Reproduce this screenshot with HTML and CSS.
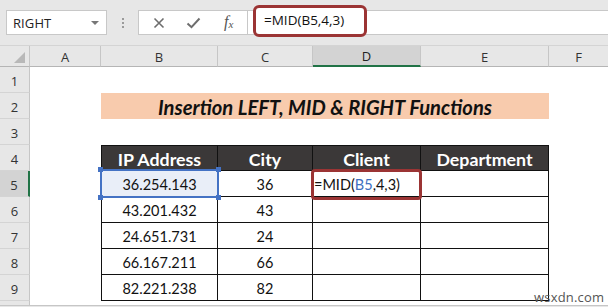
FILE: index.html
```html
<!DOCTYPE html>
<html>
<head>
<meta charset="utf-8">
<link rel="stylesheet" href="styles.css">
</head>
<body>
<div class="app">
  <div class="topbar">
    <div class="namebox"><span class="nametext">RIGHT</span><span class="caret"></span></div>
    <div class="grip"><i></i><i></i><i></i></div>
    <div class="fbtns">
      <svg class="ic ic-x" width="12" height="12" viewBox="0 0 12 12"><path d="M1.5 1.5 L10.5 10.5 M10.5 1.5 L1.5 10.5" stroke="#6d6d6d" stroke-width="1.6" fill="none"/></svg>
      <svg class="ic ic-ok" width="15" height="12" viewBox="0 0 15 12"><path d="M1.5 6.5 L5.5 10.2 L13.5 1.5" stroke="#6d6d6d" stroke-width="2" fill="none"/></svg>
      <span class="fx">f<sub>x</sub></span>
    </div>
    <div class="finput">
      <div class="fbox">=MID(B5,4,3)</div>
    </div>
  </div>
  <div class="sheet">
    <div class="corner"><span class="tri"></span></div>
    <div class="ch">A</div>
    <div class="ch">B</div>
    <div class="ch">C</div>
    <div class="ch ch-sel">D</div>
    <div class="ch">E</div>
    <div class="ch ch-last">F</div>

    <div class="rh">1</div><div class="c"></div><div class="c"></div><div class="c"></div><div class="c"></div><div class="c"></div><div class="c"></div>

    <div class="rh">2</div><div class="c"></div>
    <div class="title">Insertion LEFT, MID &amp; RIGHT Functions</div>
    <div class="c"></div>

    <div class="rh">3</div><div class="c"></div><div class="c"></div><div class="c"></div><div class="c"></div><div class="c"></div><div class="c"></div>

    <div class="rh">4</div><div class="c"></div>
    <div class="th first">IP Address</div>
    <div class="th">City</div>
    <div class="th">Client</div>
    <div class="th">Department</div>
    <div class="c"></div>

    <div class="rh rh-sel">5</div><div class="c"></div>
    <div class="td first sel"><span class="selbox"><b class="h tl"></b><b class="h tr"></b><b class="h bl"></b><b class="h br"></b></span>36.254.143</div>
    <div class="td">36</div>
    <div class="td edit"><span class="redbox"></span>=MID(<span class="ref">B5</span>,4,3)</div>
    <div class="td"></div>
    <div class="c"></div>

    <div class="rh">6</div><div class="c"></div>
    <div class="td first">43.201.432</div><div class="td">43</div><div class="td"></div><div class="td"></div>
    <div class="c"></div>

    <div class="rh">7</div><div class="c"></div>
    <div class="td first">24.651.731</div><div class="td">24</div><div class="td"></div><div class="td"></div>
    <div class="c"></div>

    <div class="rh">8</div><div class="c"></div>
    <div class="td first">66.167.211</div><div class="td">66</div><div class="td"></div><div class="td"></div>
    <div class="c"></div>

    <div class="rh">9</div><div class="c"></div>
    <div class="td first">82.221.238</div><div class="td">82</div><div class="td"></div><div class="td"></div>
    <div class="c"></div>

    <div class="rh rh-end"></div><div class="c"></div><div class="c"></div><div class="c"></div><div class="c"></div><div class="c"></div><div class="c"></div>
  </div>
  <div class="bottom"></div>
  <div class="wm">wsxdn.com</div>
</div>
</body>
</html>
```

FILE: styles.css
```css
* { box-sizing: border-box; }
html, body { margin: 0; padding: 0; }
body { width: 608px; height: 307px; overflow: hidden; background: #fff; font-family: "Open Sans", "Noto Sans", sans-serif; }
.app { position: relative; width: 608px; height: 307px; display: flex; flex-direction: column; }

.topbar { height: 45px; background: #e7e7e7; display: flex; align-items: flex-start; padding-top: 10px; padding-left: 6px; flex: none; }
.namebox { width: 101px; height: 25px; background: #fff; border: 1px solid #c8c8c8; display: flex; align-items: center; justify-content: space-between; padding: 0 7px 0 6px; }
.nametext { font-size: 13px; color: #222; letter-spacing: 0.1px; }
.caret { width: 0; height: 0; border-left: 4px solid transparent; border-right: 4px solid transparent; border-top: 4px solid #777; margin-top: 1px; }
.grip { width: 31px; height: 25px; display: flex; flex-direction: column; align-items: center; justify-content: center; gap: 2px; }
.grip i { width: 2px; height: 2px; background: #9a9a9a; display: block; }
.fbtns { width: 109px; height: 25px; background: #fff; border: 1px solid #c8c8c8; border-right: none; display: flex; align-items: center; position: relative; }
.ic { position: absolute; }
.ic-x { left: 14px; top: 6px; }
.ic-ok { left: 47px; top: 6px; }
.fx { position: absolute; left: 85px; top: 2px; font-family: "Liberation Serif", serif; font-style: italic; font-size: 16px; color: #555; }
.fx sub { font-size: 11px; vertical-align: -1px; }
.finput { flex: 1; height: 25px; background: #fff; border-top: 1px solid #c8c8c8; border-bottom: 1px solid #c8c8c8; border-left: 1px solid #c8c8c8; position: relative; }
.fbox { position: absolute; left: 5px; top: -6px; width: 114px; height: 32px; border: 3px solid #9b3434; border-radius: 6px; background: #fff; font-size: 13.5px; color: #111; padding-left: 8px; line-height: 25px; }

.sheet { display: grid; grid-template-columns: 30px 71px 117px 95px 108px 128px 59px; grid-template-rows: 21px repeat(9, 26px) 4px; border-top: 1px solid #d4d4d4; flex: none; }
.corner { background: #e7e7e7; border-right: 1px solid #c6c6c6; border-bottom: 1px solid #b5b5b5; position: relative; }
.tri { position: absolute; right: 4px; bottom: 3px; width: 0; height: 0; border-left: 11px solid transparent; border-bottom: 11px solid #b8b8b8; }
.ch { background: #e7e7e7; border-right: 1px solid #c6c6c6; border-bottom: 1px solid #b5b5b5; font-size: 13px; color: #333; display: flex; align-items: center; justify-content: center; padding-top: 1px; }
.ch-last { border-right: none; }
.ch-sel { background: #d3d3d3; border-bottom: 2px solid #217346; color: #222; }
.rh { background: #e7e7e7; border-right: 1px solid #c6c6c6; border-bottom: 1px solid #d4d4d4; font-size: 13px; color: #333; display: flex; align-items: center; justify-content: center; padding-top: 2px; }
.rh-sel { background: #d3d3d3; border-right: 2px solid #217346; }
.rh-end { border-bottom: none; }
.c { background: #fff; }

.title { grid-column: span 4; background: #f8cbad; font-family: Lato, "Open Sans", sans-serif; font-weight: 700; font-style: italic; font-size: 20.2px; color: #111; display: flex; align-items: center; justify-content: center; padding-top: 1px; }

.th { background: #3b3838; color: #fff; font-family: Lato, "Open Sans", sans-serif; font-weight: 700; font-size: 17.8px; display: flex; align-items: center; justify-content: center; border-right: 1px solid #111; border-top: 1px solid #111; border-bottom: 1px solid #111; padding-top: 1px; }
.th.first { border-left: 1px solid #111; }
.td { background: #fff; color: #111; font-family: Lato, "Open Sans", sans-serif; font-size: 14.5px; display: flex; align-items: center; justify-content: center; border-right: 1px solid #111; border-bottom: 1px solid #111; position: relative; padding-top: 1px; }
.td.first { border-left: 1px solid #111; }
.sel { background: #e9eef8; }
.selbox { position: absolute; left: -2px; top: -2px; right: -2px; bottom: -2px; border: 2px solid #4472c4; z-index: 2; }
.h { position: absolute; width: 5px; height: 5px; background: #4472c4; }
.h.tl { left: -4px; top: -4px; }
.h.tr { right: -4px; top: -4px; }
.h.bl { left: -4px; bottom: -4px; }
.h.br { right: -4px; bottom: -4px; }
.edit { justify-content: flex-start; padding-left: 1px; }
.ref { color: #3d6fc0; }
.redbox { position: absolute; left: -2px; top: -2px; right: -2px; bottom: -4px; border: 3px solid #9b3434; border-radius: 4px; z-index: 2; }

.bottom { flex: 1; background: #e7e7e7; border-top: 1px solid #c6c6c6; }
.wm { position: absolute; left: 534px; top: 288px; font-family: "Open Sans", sans-serif; font-size: 13px; color: #555; letter-spacing: 0.2px; }
```
